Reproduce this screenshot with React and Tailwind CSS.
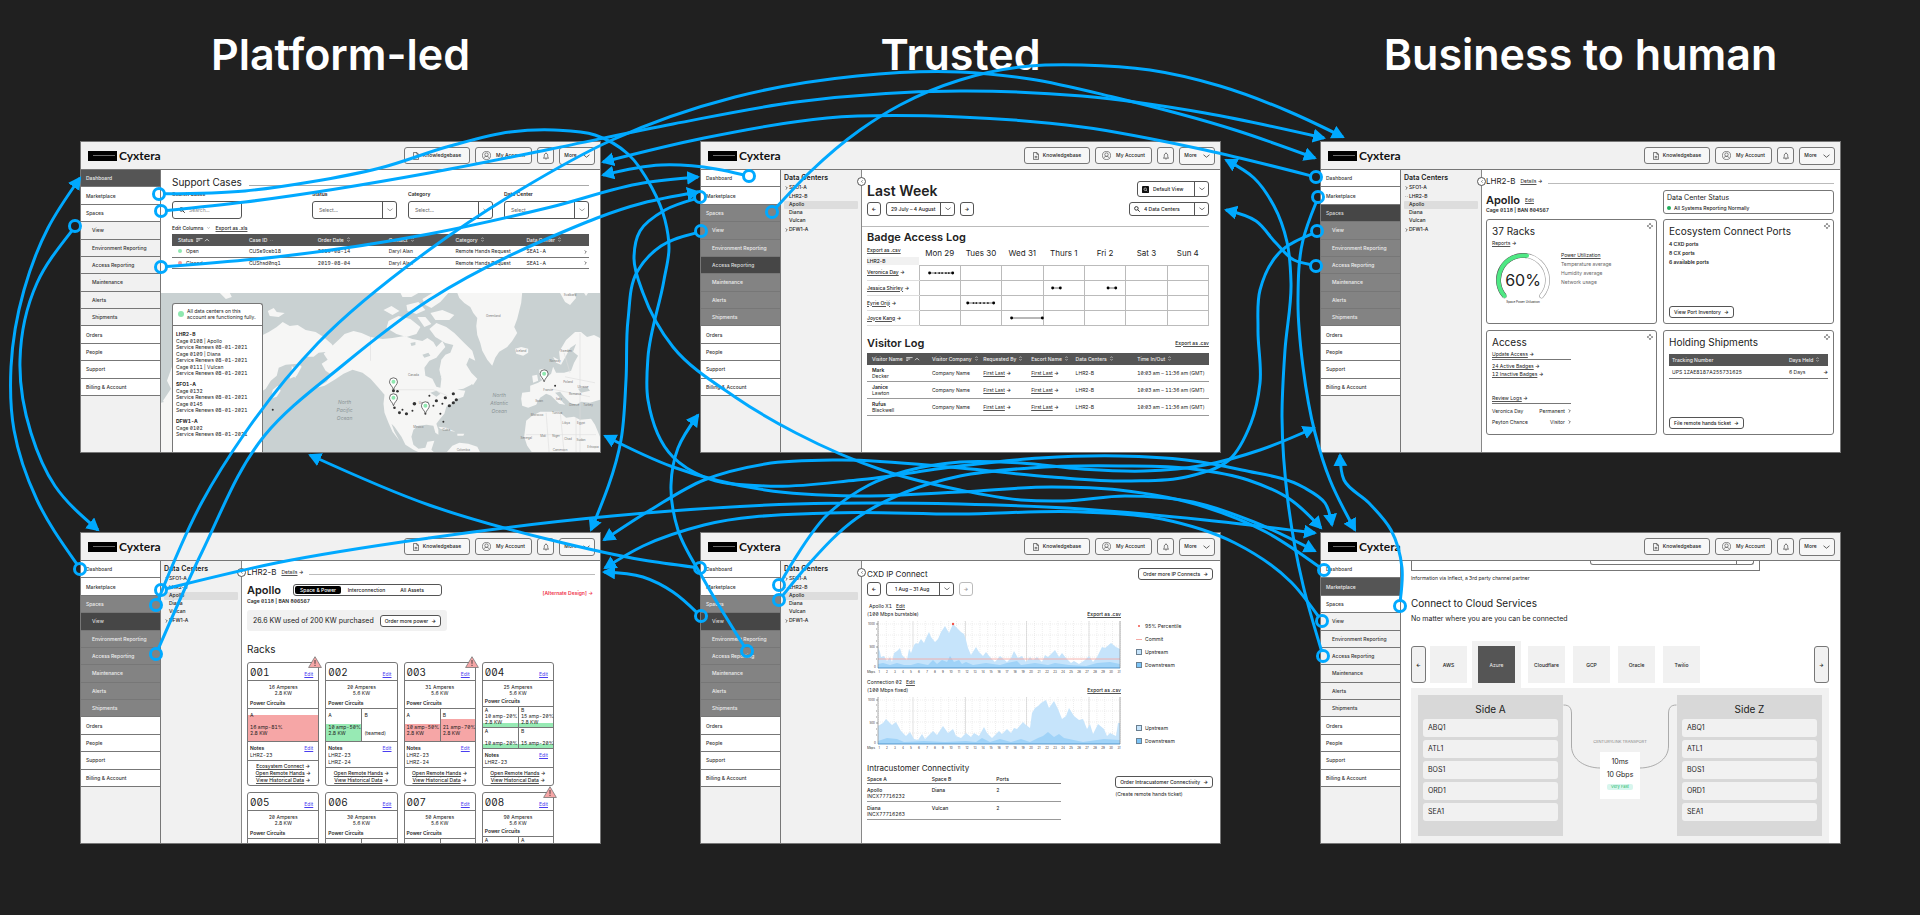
import React from "react";

/* ---------- shared pieces ---------- */

function ChevronDown({ className = "w-[7px]" }) {
  return (
    <svg viewBox="0 0 14 8" className={className} fill="none" stroke="currentColor" strokeWidth="1.4" aria-hidden="true">
      <path d="M1 1.5l6 5 6-5" />
    </svg>
  );
}

function ChevronRight() {
  return (
    <svg viewBox="0 0 6 10" className="inline-block h-[4px] w-[3px]" fill="none" stroke="currentColor" strokeWidth="1.6" aria-hidden="true">
      <path d="M1 1l4 4-4 4" />
    </svg>
  );
}

function SortIcon() {
  return (
    <svg viewBox="0 0 8 12" className="ml-[3px] inline-block h-[5px] w-[3px] align-baseline" fill="none" stroke="currentColor" strokeWidth="1.4" aria-hidden="true">
      <path d="M1 4.5L4 1l3 3.5M1 7.5L4 11l3-3.5" />
    </svg>
  );
}

function SortActiveIcon() {
  return (
    <svg viewBox="0 0 34 10" className="ml-[3px] inline-block h-[4px] w-[14px] align-baseline" fill="none" stroke="currentColor" strokeWidth="2" aria-hidden="true">
      <path d="M0 1.5h16M0 5h10M0 8.500h5M22 8l5-5 5 5" />
    </svg>
  );
}

function SearchIcon() {
  return (
    <svg viewBox="0 0 12 12" className="h-[6px] w-[6px] shrink-0" fill="none" stroke="currentColor" strokeWidth="1.8" aria-hidden="true">
      <circle cx="4.800" cy="4.800" r="3.600" />
      <path d="M7.500 7.500L11.500 11.500" />
    </svg>
  );
}

function DragIcon() {
  return (
    <svg viewBox="0 0 12 12" className="h-[6px] w-[6px]" fill="#222" aria-hidden="true">
      <path d="M6 0l2.400 2.800H3.600zM6 12L3.600 9.200h4.800zM0 6l2.800-2.400v4.800zM12 6L9.200 8.400V3.600z" />
    </svg>
  );
}

function TextLink({ children, arrow, className = "" }) {
  return (
    <a href="#" className={`whitespace-nowrap ${className}`}>
      <span className="underline decoration-[#555] underline-offset-1">{children}</span>
      {arrow && <span className="font-semibold"> →</span>}
    </a>
  );
}

function PillButton({ children }) {
  return (
    <button className="flex h-[12px] items-center rounded-[3px] border border-[#555] bg-white px-[4px] text-[5px] leading-[6px] font-medium whitespace-nowrap">
      {children}
      <span className="pl-[3px] font-bold">→</span>
    </button>
  );
}

function SquareButton({ label, children, faded }) {
  return (
    <button
      aria-label={label}
      className={`flex h-[14px] w-[14px] items-center justify-center rounded-[3px] border text-[5px] font-bold ${
        faded ? "border-[#bbb] text-[#999]" : "border-[#555]"
      }`}
    >
      {children}
    </button>
  );
}

function SelectBox({ label, value, icon, className }) {
  return (
    <div className={`flex items-stretch rounded-[3px] border border-[#555] bg-white [font-feature-settings:normal] ${className}`}>
      {icon && <span className="flex items-center pl-[4px]">{icon}</span>}
      <select aria-label={label} className="w-0 min-w-0 flex-1 appearance-none bg-transparent pl-[4px] text-[5px] outline-none">
        <option>{value}</option>
      </select>
      <span className="pointer-events-none flex w-[14px] items-center justify-center border-l border-[#555]">
        <ChevronDown className="w-[6px]" />
      </span>
    </div>
  );
}

const NAV = [
  ["Dashboard"],
  ["Marketplace"],
  ["Spaces", true],
  ["View", true, true],
  ["Environment Reporting", true, true],
  ["Access Reporting", true, true],
  ["Maintenance", true, true],
  ["Alerts", true, true],
  ["Shipments", true, true],
  ["Orders"],
  ["People"],
  ["Support"],
  ["Billing & Account"],
];

function Sidebar({ active }) {
  const inSpaces = NAV.some(([name, group]) => name === active && group);
  return (
    <nav className="w-[80px] shrink-0 border-r border-[#777] bg-[#f1f1f1]">
      <ul className="grid h-[226px] auto-rows-fr text-[5px] leading-[6px]">
        {NAV.map(([name, group, sub]) => {
          let tone = "bg-white text-[#333]";
          if (name === active) tone = inSpaces ? "bg-[#464646] text-[#ddd]" : "bg-[#555] text-[#eee]";
          else if (group && inSpaces) tone = "bg-[#838383] text-[#eee]";
          else if (sub) tone = "bg-[#f1f1f1] text-[#333]";
          return (
            <li key={name} className={`border-b border-[#777] ${tone}`}>
              <a href="#" className={`flex h-full items-center font-medium ${sub ? "pl-[11px]" : "pl-[5px]"}`}>
                {name}
              </a>
            </li>
          );
        })}
      </ul>
    </nav>
  );
}

function DataCenters() {
  return (
    <aside className="relative w-[81px] shrink-0 border-r border-[#888] bg-[#f1f1f1] px-[3px] pt-[3px] text-[5px] [font-feature-settings:normal]">
      <h3 className="text-[7px] leading-[10px] font-semibold">Data Centers</h3>
      <ul className="font-medium">
        <li className="flex h-[9px] items-center gap-[1px] pl-[1px]"><ChevronRight />SFO1-A</li>
        <li className="flex h-[9px] items-center gap-[1px] pl-[1px]"><ChevronDown className="w-[3px]" />LHR2-B</li>
        <li className="flex h-[8px] items-center rounded-[1px] bg-[#ddd] pl-[5px]">Apollo</li>
        <li className="flex h-[8px] items-center pl-[5px]">Diana</li>
        <li className="flex h-[8px] items-center pl-[5px]">Vulcan</li>
        <li className="flex h-[9px] items-center gap-[1px] pl-[1px]"><ChevronRight />DFW1-A</li>
      </ul>
      <button
        aria-label="Collapse data centers"
        className="absolute top-[7px] -right-[5px] z-10 flex h-[9px] w-[9px] items-center justify-center rounded-full border border-[#555] bg-white"
      >
        <svg viewBox="0 0 6 10" className="h-[3px] w-[2px]" fill="none" stroke="#333" strokeWidth="2">
          <path d="M5 1L1 5l4 4" />
        </svg>
      </button>
    </aside>
  );
}

function HeaderBar() {
  const box = "flex items-center justify-center rounded-[3px] border border-[#777] bg-[#f7f7f7]";
  return (
    <header className="flex h-[28px] shrink-0 items-center justify-between border-b border-[#777] bg-[#f1f1f1] pr-[5px] pl-[7px]">
      <a href="#" className="flex items-center gap-[2px] font-['Lato',sans-serif] text-[12px] leading-[14px] font-bold text-[#111]">
        <svg viewBox="0 0 29 10" className="h-[10px] w-[29px]" aria-hidden="true">
          <rect width="29" height="10" fill="#000" />
          <path d="M5 4.500h22" stroke="#999" strokeWidth="0.700" />
        </svg>
        Cyxtera
      </a>
      <div className="flex items-center gap-[5px] text-[5px] font-medium">
        <button className={`${box} h-[17px] w-[66px] gap-[4px]`}>
          <svg viewBox="0 0 14 18" className="h-[8px] w-[6px]" fill="none" stroke="#333" strokeWidth="1.500">
            <path d="M1 1h8l4 4v12H1zM9 1v4h4M4 10h6M4 13h6" />
          </svg>
          Knowledgebase
        </button>
        <button className={`${box} h-[17px] w-[57px] gap-[5px]`}>
          <svg viewBox="0 0 20 20" className="h-[9px] w-[9px]" fill="none" stroke="#333" strokeWidth="1.200">
            <circle cx="10" cy="10" r="9" />
            <circle cx="10" cy="8" r="3.800" />
            <path d="M4 16c1-3 3-4 6-4s5 1 6 4" />
          </svg>
          My Account
        </button>
        <button aria-label="Notifications" className={`${box} h-[17px] w-[17px]`}>
          <svg viewBox="0 0 14 18" className="h-[8px] w-[6px]" fill="none" stroke="#333" strokeWidth="1.500">
            <path d="M1 14h12c-1.500-1-2-2-2-6 0-3-1.500-5-4-5S3 5 3 8c0 4-.5 5-2 6zM7 1v2M5.500 16h3" />
          </svg>
        </button>
        <button className={`${box} h-[18px] w-[36px] gap-[6px]`}>
          More
          <ChevronDown />
        </button>
      </div>
    </header>
  );
}

function Screen({ name, active, centers, children }) {
  return (
    <article aria-label={name} className="flex aspect-[521/312] flex-col overflow-hidden border border-[#777] bg-white text-[#222]">
      <HeaderBar />
      <div className="flex min-h-0 flex-1">
        <Sidebar active={active} />
        {centers && <DataCenters />}
        <div className="flex min-w-0 flex-1 flex-col">{children}</div>
      </div>
    </article>
  );
}

/* ---------- support cases ---------- */

const PINS = [[233, 97], [233, 113], [265, 121], [384, 89]];
const DOTS = [
  [233, 98, 1.5], [237, 98.500, 1.300], [234, 115, 1.300], [239, 120, 1.500], [242, 117, 1], [246, 121, 1.600], [252, 118, 1],
  [254, 111, 1.800], [269, 103, 1], [276, 108, 1.600], [273, 113, 1], [265, 121, 1], [282, 111, 1], [285, 105, 1.600],
  [293, 101, 1.600], [296, 107, 1.600], [293, 110, 1.600], [289, 113, 1.600], [280, 121, 1], [283, 129, 1], [395, 93, 1], [112, 117, 1],
];
const PLACES = [
  [333, 24, "Greenland"], [361, 59, "Iceland"], [253, 83, "Canada"], [395, 69, "Norway"], [406, 59, "Sweden"], [263, 111, "United"],
  [258, 135, "Mexico"], [286, 138, "Cuba"], [388, 98, "France"], [408, 90, "Poland"], [423, 95, "Ukraine"], [415, 102, "Romania"],
  [379, 109, "Spain"], [399, 107, "Italy"], [414, 113, "Greece"], [428, 113, "Turkey"], [377, 123, "Morocco"], [397, 121, "Tunisia"],
  [406, 131, "Libya"], [421, 131, "Egypt"], [366, 146, "Senegal"], [383, 144, "Mali"], [396, 144, "Niger"], [408, 147, "Chad"],
  [421, 148, "Sudan"], [433, 155, "Ethiopia"], [400, 158, "Cameroon"], [303, 158, "Colombia"], [410, 3, "Svalbard"],
];

function WorldMap() {
  return (
    <svg viewBox="0 0 440 160" preserveAspectRatio="xMinYMin slice" className="h-full w-full" role="img" aria-label="Data center map">
      <rect width="440" height="180" fill="#c9d1d2" />
      <g fill="#f6f6f5">
        {/* Greenland */}
        <path d="M297 0l2 5 5 5 6 4 3 6 4 5-1 8 1 9 3 8 2 8 5 9 5 6 3-8 4-6 8-5 5-6 5-8-3-6 3-8 2-8 2-8 1-10z" />
        {/* North America */}
        <path d="M179 46l5-5 9-3 8 2 9 4 12 2 10-1 12-2 8 3 10 2 5-3 6 4 3 5 6-6 3 6-5 6-4 5-7 3-5 7 1 8 7 3 4 8 4 1 1-9-2-9 2-10 7 0 5 4 4 6 5 5 6 3 3 7-8 4-6 1 8 1-2 6-8 3-4 4-5 3-2 7-5 6-3 4 2 6 0 5-3-2-2-7-7-1-8 1-5 4-2 7 2 8 5 4 7-1 2-6 7-1-3 9 4 4 6 2 4 7 6 2-4 2-8-4-8-5-10-4-8-4-8-5-4-8-7-10-3-3 3 8 5 9-7-9-4-9-4-10-1-9 1-9-6-7-8-9-8-6-10-3-9 4-9 6-10 6-8 2 10-6 5-7-6-4-4-7 6-4-4-6z" />
        {/* Labrador and Baffin */}
        <path d="M281 67l4-5 5-2 3-8-8-2-10-6-6-8 7-6 10 4 8 6 10 10 8 8 3 10-6-3-3 7 5 8 6 6-4 6-8-2-7 2-8-4-3-9z" />
        {/* Arctic islands */}
        <path d="M228 28l10-5 12 3 10 8-4 7-10 3-10-3-10-6zM246 12l12-3 7 8-9 4-9-3zM262 6l10-6 16 0-8 9-9 6-6-3zM270 20l12-3 12 5-5 5-14 0zM240 0l18 0-7 4-9 0zM223 17l8-4 8 5-7 4zM257 24l8 0 6 7-7 3z" />
        {/* Caribbean and South America */}
        <path d="M278 134l8 1 9 4-6-1-9-2zM297 141l7 0-1 2-6 0zM286 160l6-7 7-3 9 1 9 3 3 6z" />
        {/* Iceland and British Isles */}
        <path d="M355 56l6-2 7 2 0 4-5 3-7-2zM379 77l5-1 1 6 4 7-1 4-7 1 3-5-4-4zM372 83l5-1 1 6-5 2z" />
        {/* Europe */}
        <path d="M400 68l-1-9 7-12 9-8 6 0 6 5 7-2 6 3v62l-10 3-9-1-5 3-6-2-6-6-4-5-5 1 6 6 4 6-6-1-8-8-5-2-6 4-4 7-8 3-6-2-1-7 1-6 8-1 0-6 8-3 8-5 5-4 2-7 3 6 8 0 7-2 3-8 4-7-5-4 3-8-6 4-4 8-5 9-5-2-3-6z" />
        {/* Africa */}
        <path d="M366 128l6-5 8-4 10 0 9 0 7 6 8-1 6 3 11-1 4 6 5 12v16h-68l-5-7-3-9z" />
        {/* Svalbard */}
        <path d="M400 0l14 0 2 5-6 7-5-3zM424 0l4 0-2 3z" />
        {/* Siberia and East Asia */}
        <path d="M102 42l6-3 8-5 6-5 7 4 8-1 8 5 10 2 8 5 8 7 4 6-8 2-9 1-5 4-9 0-7 6 4 4-5 9-7 3 2-9 6-6-12 1-7 3-2 8-6 5-5 8-6 4 3 9-4 8-7-2-2 15-20 30H0v-20l5-6-3-8 6-9-6-9 8-12-4-8 5-14 4-8 20 6z" />
        <path d="M112 97l5-4 3 5-4 6-6 2zM131 73l4 4 0 8-4-2zM107 18l6-3 3 4 8 1-6 4-9-1zM59 0l10 0 2 4-6 2z" />
        <path d="M169 58l5-4 6 6-4 2zM0 110l8-2 3 10 2 12 0 30H0z" />
      </g>
      <path d="M420 40v120M400 118l4 42M386 120l3 40M416 125v35M366 142h70M405 84l30 6M390 96l40 8M404 60l6 20M210 44v24M231 97h42l14 6" stroke="#ddd" strokeWidth="0.600" fill="none" />
      <g fill="#c9d1d2">
        <path d="M262 62l6-2 2 3-6 2zM250 50l5-1 0 3-4 1zM276 84l5-1-1 3zM270 100l6-2 4 3-4 3zM400 106l6 2-2 3zM418 96l9-2 3 4-9 2z" />
      </g>
      <g fontSize="3" fill="#777" textAnchor="middle">
        {PLACES.map(([x, y, t]) => (
          <text key={t} x={x} y={y}>{t}</text>
        ))}
      </g>
      <g fontSize="5" fill="#8a9496" fontStyle="italic" textAnchor="middle">
        <text x="184" y="111">North</text>
        <text x="184" y="119">Pacific</text>
        <text x="184" y="127">Ocean</text>
        <text x="339" y="104">North</text>
        <text x="339" y="112">Atlantic</text>
        <text x="339" y="120">Ocean</text>
      </g>
      {DOTS.map(([x, y, r]) => (
        <circle key={`${x}-${y}`} cx={x} cy={y} r={r} fill="#333" />
      ))}
      {PINS.map(([x, y]) => (
        <g key={`${x}-${y}`}>
          <path d={`M${x} ${y}c-1-4-4-5-4-8a4 4 0 0 1 8 0c0 3-3 4-4 8z`} fill="#fff" stroke="#333" strokeWidth="0.700" />
          <circle cx={x} cy={y - 8} r="2" fill="#8fe8b0" />
        </g>
      ))}
    </svg>
  );
}

const CAGES = [
  ["LHR2-B", ["Cage 0108 | Apollo", "Cage 0109 | Diana", "Cage 0111 | Vulcan"]],
  ["SFO1-A", ["Cage 0132", "Cage 0145"]],
  ["DFW1-A", ["Cage 0102"]],
];

function SupportCases() {
  return (
    <Screen name="Support Cases" active="Dashboard">
      <div className="px-[11px] pt-[6px]">
        <div className="flex h-[12px] items-center gap-[7px]">
          <h3 className="text-[10px] leading-[12px]">Support Cases</h3>
          <span className="mt-[6px] h-px flex-1 bg-[#aaa]" />
        </div>
        <div className="mt-[3px] flex justify-between text-[5px] leading-[6px]">
          <div className="w-[70px]">
            <label htmlFor="search-cases" className="block font-semibold">Search Cases</label>
            <div className="mt-[4px] flex h-[18px] items-center gap-[4px] rounded-[3px] border border-[#555] px-[6px]">
              <SearchIcon />
              <input id="search-cases" placeholder="Search..." className="w-full min-w-0 bg-transparent outline-none placeholder:text-[#888]" />
            </div>
          </div>
          <div className="flex gap-[11px]">
            {["Status", "Category", "Data Center"].map((label) => (
              <div key={label} className="w-[85px]">
                <span className="block font-semibold">{label}</span>
                <SelectBox label={label} value="Select..." className="mt-[4px] h-[18px] pl-[2px] text-[#666]" />
              </div>
            ))}
          </div>
        </div>
        <div className="mt-[6px] flex items-center gap-[6px] text-[5px] leading-[6px] font-medium">
          <button className="flex items-center gap-[3px]">
            Edit Columns <ChevronDown className="w-[3px]" />
          </button>
          <TextLink>Export as .xls</TextLink>
        </div>
        <table className="mt-[3px] w-full table-fixed text-left text-[5px] leading-[6px]">
          <colgroup>
            <col className="w-[17%]" />
            <col className="w-[17%]" />
            <col className="w-[17%]" />
            <col className="w-[17%]" />
            <col className="w-[17%]" />
            <col className="w-[12%]" />
            <col className="w-[3%]" />
          </colgroup>
          <thead>
            <tr className="h-[12px] bg-[#555] text-[#eee]">
              <th className="pl-[6px] font-medium whitespace-nowrap">Status<SortActiveIcon /></th>
              <th className="pl-[6px] font-medium">Case ID <ChevronDown className="ml-px inline-block w-[3px]" /></th>
              <th className="pl-[4px] font-medium">Order Date<SortIcon /></th>
              <th className="pl-[4px] font-medium">Contact<SortIcon /></th>
              <th className="font-medium">Category<SortIcon /></th>
              <th className="font-medium whitespace-nowrap">Data Center<SortIcon /></th>
              <th aria-label="Open" />
            </tr>
          </thead>
          <tbody className="whitespace-nowrap">
            {[
              ["Open", "CUSe9ceb18", "2019-08-14", "bg-[#8fe8b0]"],
              ["Closed", "CUShsd0nq1", "2019-08-04", "bg-[#f59a9a]"],
            ].map(([status, id, date, dot]) => (
              <tr key={id} className="h-[11px] border-b border-[#777]">
                <td className="pl-[6px]"><span className={`mr-[4px] inline-block h-[4px] w-[4px] rounded-full ${dot}`} />{status}</td>
                <td className="pl-[6px]">{id}</td>
                <td className="pl-[4px]">{date}</td>
                <td className="pl-[4px]">Daryl Alan</td>
                <td>Remote Hands Request</td>
                <td>SEA1-A</td>
                <td className="pr-[2px] text-right"><ChevronRight /></td>
              </tr>
            ))}
          </tbody>
        </table>
      </div>
      <div className="relative mt-[24px] min-h-0 flex-1">
        <WorldMap />
        <div className="absolute top-[10px] bottom-0 left-[11px] w-[91px] rounded-t-[3px] border border-b-0 border-[#777] bg-white text-[5px] leading-[6px]">
          <p className="flex h-[22px] items-center gap-[3px] border-b border-[#777] pl-[5px] whitespace-nowrap">
            <span className="h-[6px] w-[6px] shrink-0 rounded-full bg-[#8fe8b0]" />
            <span>All data centers on this<br />account are functioning fully.</span>
          </p>
          {CAGES.map(([site, cages]) => (
            <section key={site} className="pt-[5px] pl-[3px] whitespace-nowrap">
              <h4 className="font-bold">{site}</h4>
              {cages.map((cage) => (
                <p key={cage} className="mt-px">{cage}<br />Service Renews 08-01-2021</p>
              ))}
            </section>
          ))}
        </div>
      </div>
    </Screen>
  );
}

/* ---------- access reporting ---------- */

const BADGES = [
  ["Veronica Day", { 0: [10, 16, 20, 23, 27, 30, 34] }],
  ["Jessica Shirley", { 3: [9, 17], 4: [24, 32] }],
  ["Eyrie Oriji", { 1: [7, 13, 16, 20, 24, 28, 34] }],
  ["Joyce Kang", { 2: [10, 42] }],
];
const DAYS = ["Mon 29", "Tues 30", "Wed 31", "Thurs 1", "Fri 2", "Sat 3", "Sun 4"];

function AccessReporting() {
  return (
    <Screen name="Access Reporting" active="Access Reporting" centers>
      <div className="pr-[11px] pl-[5px] pt-[11px] text-[5px] leading-[6px]">
        <div className="flex h-[16px] items-center justify-between">
          <h3 className="pt-[3px] text-[14px] leading-[16px] font-semibold">Last Week</h3>
          <SelectBox
            label="View"
            value="Default View"
            className="h-[16px] w-[72px] font-medium"
            icon={
              <svg viewBox="0 0 12 12" className="h-[7px] w-[7px]">
                <rect width="12" height="12" rx="1.500" fill="#111" />
                <circle cx="5.500" cy="5.500" r="2.200" fill="none" stroke="#fff" />
                <path d="M7 7l2 2" stroke="#fff" />
              </svg>
            }
          />
        </div>
        <div className="mt-[5px] flex items-center gap-[5px] font-medium">
          <SquareButton label="Previous week">←</SquareButton>
          <SelectBox label="Week" value="29 July – 4 August" className="h-[14px] w-[69px]" />
          <SquareButton label="Next week">→</SquareButton>
          <SelectBox label="Data centers" value="4 Data Centers" icon={<SearchIcon />} className="ml-auto h-[14px] w-[80px]" />
        </div>
      </div>
      <hr className="mt-[10px] mr-[11px] border-[#bbb]" />
      <div className="pr-[11px] pl-[5px] text-[5px] leading-[6px]">
        <h4 className="mt-[5px] text-[11px] leading-[11px] font-semibold">Badge Access Log</h4>
        <table className="w-full table-fixed">
          <thead>
            <tr className="h-[22px]">
              <th className="w-[52px] p-0 text-left align-bottom font-medium">
                <TextLink>Export as .csv</TextLink>
                <span className="mt-[4px] block h-[8px] bg-[#f1f1f1] leading-[8px] [font-feature-settings:normal]">LHR2-B</span>
              </th>
              {DAYS.map((day) => (
                <th key={day} className="pb-[2px] text-[8px] leading-[10px] font-normal whitespace-nowrap [font-feature-settings:normal]">{day}</th>
              ))}
            </tr>
          </thead>
          <tbody>
            {BADGES.map(([name, events]) => (
              <tr key={name} className="h-[15px]">
                <td className="border-b border-[#ddd] p-0 font-medium"><TextLink arrow>{name}</TextLink></td>
                {DAYS.map((day, i) => (
                  <td key={day} className="border border-[#bbb] p-0">
                    {events[i] && (
                      <svg viewBox="0 0 42 6" className="block h-[6px] w-full overflow-visible" preserveAspectRatio="xMinYMid meet">
                        <path d={`M${events[i][0]} 3H${events[i].at(-1)}`} stroke="#444" strokeWidth="0.800" />
                        {events[i].map((x, k) => (
                          <circle key={x} cx={x} cy="3" r={k === 0 || k === events[i].length - 1 ? 1.500 : 0.900} fill="#000" />
                        ))}
                      </svg>
                    )}
                  </td>
                ))}
              </tr>
            ))}
          </tbody>
        </table>
        <div className="mt-[11px] flex h-[12px] items-center justify-between">
          <h4 className="text-[11px] leading-[12px] font-semibold">Visitor Log</h4>
          <TextLink className="font-medium">Export as .csv</TextLink>
        </div>
        <table className="mt-[4px] w-full table-fixed text-left whitespace-nowrap">
          <colgroup>
            <col className="w-[19%]" />
            <col className="w-[15%]" />
            <col className="w-[14%]" />
            <col className="w-[13%]" />
            <col className="w-[18%]" />
            <col />
          </colgroup>
          <thead>
            <tr className="h-[12px] bg-[#555] text-[#eee]">
              <th className="pl-[5px] font-medium">Visitor Name<SortActiveIcon /></th>
              <th className="font-medium">Visitor Company<SortIcon /></th>
              <th className="font-medium">Requested By<SortIcon /></th>
              <th className="font-medium">Escort Name<SortIcon /></th>
              <th className="font-medium">Data Centers<SortIcon /></th>
              <th className="font-medium">Time In/Out<SortIcon /></th>
            </tr>
          </thead>
          <tbody>
            {[["Mark", "Decker"], ["Janice", "Lawton"], ["Rufus", "Blackwell"]].map(([first, last]) => (
              <tr key={first} className="h-[17px] border-b border-[#999]">
                <td className="pl-[5px]"><b className="font-semibold">{first}</b><br />{last}</td>
                <td>Company Name</td>
                <td><TextLink arrow>First Last</TextLink></td>
                <td><TextLink arrow>First Last</TextLink></td>
                <td className="[font-feature-settings:normal]">LHR2-B</td>
                <td>10:03 am – 11:36 am (GMT)</td>
              </tr>
            ))}
          </tbody>
        </table>
      </div>
    </Screen>
  );
}

/* ---------- spaces overview ---------- */

function Card({ title, children }) {
  return (
    <section className="relative flex h-[105px] flex-col items-start rounded-[3px] border border-[#777] px-[5px] pt-[5px] pb-[5px] text-[5px] leading-[6px]">
      <h4 className="text-[10px] leading-[12px] [font-feature-settings:normal]">{title}</h4>
      <span className="absolute top-[3px] right-[3px]"><DragIcon /></span>
      {children}
    </section>
  );
}

function Gauge() {
  return (
    <svg viewBox="0 0 60 58" className="h-[58px] w-[60px] [font-feature-settings:normal]" role="img" aria-label="Space power utilization 60%">
      <path d="M12.500 46A24.500 24.500 0 1 1 49.500 46" fill="none" stroke="#999" strokeWidth="4.800" strokeLinecap="round" />
      <path d="M12.500 46A24.500 24.500 0 1 1 49.500 46" fill="none" stroke="#fff" strokeWidth="3.600" strokeLinecap="round" />
      <path d="M12.500 46A24.500 24.500 0 0 1 35 5.800" fill="none" stroke="#555" strokeWidth="4.800" />
      <path d="M12.500 46A24.500 24.500 0 0 1 35 5.800" fill="none" stroke="#4fe884" strokeWidth="4" strokeLinecap="round" />
      <text x="31" y="36" fontSize="16" textAnchor="middle" fill="#222">60%</text>
      <text x="31" y="53" fontSize="3" textAnchor="middle" fill="#222">Space Power Utilization</text>
    </svg>
  );
}

function SpacesOverview() {
  return (
    <Screen name="Spaces" active="Spaces" centers>
      <div className="pr-[6px] pl-[4px] pt-[6px] text-[5px] leading-[6px]">
        <div className="flex h-[10px] items-center gap-[5px]">
          <h3 className="text-[8px] leading-[10px] [font-feature-settings:normal]">LHR2-B</h3>
          <TextLink arrow>Details</TextLink>
          <span className="mt-[4px] h-px flex-1 bg-[#bbb]" />
        </div>
        <div className="mt-[4px] grid grid-cols-2 gap-x-[6px]">
          <div>
            <div className="mt-[4px] flex items-center gap-[5px]">
              <h4 className="text-[11px] leading-[12px] font-semibold">Apollo</h4>
              <TextLink>Edit</TextLink>
            </div>
            <p className="mt-px font-semibold">Cage 0118 | BAN 804567</p>
          </div>
          <div className="h-[24px] rounded-[3px] border border-[#777] px-[3px] pt-[2px]">
            <h4 className="text-[7px] leading-[10px]">Data Center Status</h4>
            <p className="mt-[2px] flex items-center gap-[3px] font-medium">
              <span className="h-[4px] w-[4px] rounded-full bg-[#1fae5c]" />
              All Systems Reporting Normally
            </p>
          </div>
        </div>
        <div className="mt-[5px] grid grid-cols-2 gap-[6px]">
          <Card title="37 Racks">
            <TextLink arrow className="mt-[3px]">Reports</TextLink>
            <div className="mt-[4px] flex gap-[9px]">
              <Gauge />
              <ul className="grid content-start gap-[3px] pt-[2px] text-[#666]">
                <li className="text-[#222]"><TextLink>Power Utilization</TextLink></li>
                <li>Temperature average</li>
                <li>Humidity average</li>
                <li>Network usage</li>
              </ul>
            </div>
          </Card>
          <Card title="Ecosystem Connect Ports">
            <ul className="mt-[4px] grid flex-1 content-start gap-[3px] font-semibold">
              <li>4 CXD ports</li>
              <li>8 CX ports</li>
              <li>6 available ports</li>
            </ul>
            <PillButton>View Port Inventory</PillButton>
          </Card>
          <Card title="Access">
            <div className="flex w-[79px] flex-col items-start">
              <TextLink arrow className="mt-[3px] w-full border-b border-[#777] pb-[2px]">Update Access</TextLink>
              <TextLink arrow className="mt-[3px]">24 Active Badges</TextLink>
              <TextLink arrow className="mt-[2px]">12 Inactive Badges</TextLink>
              <TextLink arrow className="mt-[18px] w-full border-b border-[#777] pb-[2px]">Review Logs</TextLink>
              {[["Veronica Day", "Permanent"], ["Peyton Chance", "Visitor"]].map(([n, k]) => (
                <p key={n} className="mt-[5px] flex w-full items-center justify-between first-of-type:mt-[4px]">
                  <span>{n}</span>
                  <span className="flex items-center gap-[3px]">{k} <ChevronRight /></span>
                </p>
              ))}
            </div>
          </Card>
          <Card title="Holding Shipments">
            <div className="w-full flex-1">
              <table className="mt-[6px] w-full table-fixed text-left whitespace-nowrap">
                <colgroup>
                  <col />
                  <col className="w-[32px]" />
                  <col className="w-[7px]" />
                </colgroup>
                <thead>
                  <tr className="h-[12px] bg-[#555] text-[#eee]">
                    <th className="pl-[3px] font-medium">Tracking Number</th>
                    <th className="font-medium">Days Held<SortIcon /></th>
                    <th aria-label="Open" />
                  </tr>
                </thead>
                <tbody>
                  <tr className="h-[12px] border-b border-[#777]">
                    <td className="pl-[3px]">UPS 1ZAE8187A255731625</td>
                    <td>6 Days</td>
                    <td className="text-right font-bold">→</td>
                  </tr>
                </tbody>
              </table>
            </div>
            <PillButton>File remote hands ticket</PillButton>
          </Card>
        </div>
      </div>
    </Screen>
  );
}

/* ---------- rack view ---------- */

const RED = "bg-[#f6a6a6]";
const GREEN = "bg-[#97eab4]";
const RACKS = [
  { id: "001", amps: "16 Amperes", kw: "2.8 KW", warn: true, eco: true, circuits: [["A", "16 amp-81%", "2.8 KW", 81, RED]], notes: ["LHRZ-23", "LHRZ-24"] },
  { id: "002", amps: "20 Amperes", kw: "5.6 KW", circuits: [["A", "10 amp-50%", "2.8 KW", 52, GREEN], ["B", "(teamed)", "", 0, ""]], notes: ["LHRZ-23", "LHRZ-24"] },
  { id: "003", amps: "31 Amperes", kw: "5.6 KW", warn: true, circuits: [["A", "10 amp-50%", "2.8 KW", 52, RED], ["B", "21 amp-70%", "2.8 KW", 70, RED]], notes: ["LHRZ-23", "LHRZ-24"] },
  {
    id: "004",
    amps: "25 Amperes",
    kw: "5.6 KW",
    dense: true,
    circuits: [
      ["A", "10 amp-20%", "2.8 KW", 20, GREEN],
      ["B", "15 amp-20%", "2.8 KW", 20, GREEN],
      ["A", "10 amp-20%", "", 20, GREEN],
      ["B", "15 amp-20%", "", 20, GREEN],
    ],
    notes: ["LHRZ-23", "LHRZ-23"],
  },
  { id: "005", amps: "20 Amperes", kw: "2.8 KW", circuits: [["A", "", "", 0, ""]] },
  { id: "006", amps: "30 Amperes", kw: "5.6 KW", circuits: [["A", "", "", 0, ""], ["B", "", "", 0, ""]] },
  { id: "007", amps: "50 Amperes", kw: "5.6 KW", circuits: [["A", "", "", 0, ""], ["B", "", "", 0, ""]] },
  { id: "008", amps: "90 Amperes", kw: "5.6 KW", warn: true, dense: true, circuits: [["A", "10 amp-60%", "", 0, ""], ["A", "30 amp-60%", "", 0, ""]] },
];

function Rack({ id, amps, kw, warn, eco, dense, circuits, notes }) {
  return (
    <section className="relative flex h-[124px] flex-col rounded-[3px] border border-[#777] text-[5px] leading-[6px]">
      {warn && (
        <svg viewBox="0 0 14 12" className="absolute -top-[7px] -right-[4px] z-10 h-[12px] w-[14px]" aria-label="Warning">
          <path d="M7 .7L13.400 11.500H.6z" fill="#f6a6a6" stroke="#777" strokeWidth="0.800" />
          <path d="M7 4v3.800M7 8.800v1.200" stroke="#333" strokeWidth="0.900" />
        </svg>
      )}
      <header className="flex h-[18px] items-center justify-between border-b border-[#777] pr-[5px] pl-[2px]">
        <h5 className="text-[10px] leading-[12px]">{id}</h5>
        <a href="#" className="mt-[4px] text-[#4a3df0] underline">Edit</a>
      </header>
      <p className="mt-[3px] text-center">{amps}<br />{kw}</p>
      <p className={`pl-[2px] font-semibold ${dense ? "mt-[2px]" : "mt-[4px]"}`}>Power Circuits</p>
      <div className={`mt-[2px] grid border-t border-[#777] ${circuits.length > 1 ? "grid-cols-2" : "grid-cols-1"}`}>
        {circuits.map(([label, load, power, level, tone], i) => (
          <div
            key={i}
            className={`relative flex flex-col border-b border-[#777] pl-[2px] whitespace-nowrap ${
              dense ? "h-[21px] pb-[2px]" : "h-[33px] pt-[3px] pb-[5px]"
            } ${i % 2 ? "border-l" : ""} ${notes ? "justify-between" : ""}`}
          >
            <span className={`absolute inset-x-0 bottom-0 ${tone}`} style={{ height: `${level}%` }} />
            <span className="relative">{label}</span>
            {load && <span className="relative">{load}{power && <><br />{power}</>}</span>}
          </div>
        ))}
      </div>
      {notes && (
        <>
          <div className="min-h-0 flex-1 overflow-hidden pt-[3px] pr-[5px] pl-[2px]">
            <p className="flex justify-between font-semibold">Notes <a href="#" className="font-normal text-[#4a3df0] underline">Edit</a></p>
            {notes.map((note, i) => (
              <p key={i} className="mt-[1px]">{note}</p>
            ))}
          </div>
          <div className="flex flex-col items-center gap-px border-t border-[#777] py-[2px] font-medium">
            {eco && <TextLink arrow>Ecosystem Connect</TextLink>}
            <TextLink arrow>Open Remote Hands</TextLink>
            <TextLink arrow>View Historical Data</TextLink>
          </div>
        </>
      )}
    </section>
  );
}

function RackView() {
  return (
    <Screen name="Racks" active="View" centers>
      <div className="pr-[5px] pl-[5px] pt-[6px] text-[5px] leading-[6px]">
        <div className="flex h-[10px] items-center gap-[5px]">
          <h3 className="text-[8px] leading-[10px] [font-feature-settings:normal]">LHR2-B</h3>
          <TextLink arrow>Details</TextLink>
          <span className="mt-[4px] h-px flex-1 bg-[#bbb]" />
        </div>
        <div className="mt-[7px] flex h-[12px] items-center">
          <h4 className="text-[11px] leading-[12px] font-semibold">Apollo</h4>
          <div role="tablist" className="ml-[12px] flex h-[12px] w-[149px] items-stretch rounded-[3px] border border-[#555] p-px font-medium">
            <button role="tab" aria-selected="true" className="w-[46px] rounded-[2px] bg-black text-white">Space &amp; Power</button>
            <button role="tab" className="flex-1 pl-[2px]">Interconnection</button>
            <button role="tab" className="w-[50px] pr-[6px]">All Assets</button>
          </div>
          <a href="#" className="mt-[6px] ml-auto pr-[2px] font-semibold text-[#f0344a]">[Alternate Design] →</a>
        </div>
        <p className="mt-[2px] font-semibold">Cage 0118 | BAN 806567</p>
        <div className="mt-[6px] flex h-[21px] w-fit items-center gap-[6px] rounded-[3px] bg-[#f1f1f1] px-[6px]">
          <span className="text-[7px] leading-[9px] [font-feature-settings:normal]">26.6 KW used of 200 KW purchased</span>
          <PillButton>Order more power</PillButton>
        </div>
        <h4 className="mt-[12px] text-[10px] leading-[12px]">Racks</h4>
        <div className="mt-[7px] mr-[41px] grid grid-cols-4 gap-[6px]">
          {RACKS.map((rack) => (
            <Rack key={rack.id} {...rack} />
          ))}
        </div>
      </div>
    </Screen>
  );
}

/* ---------- CXD IP connect ---------- */

const UP_1 = "0,26 2,31 3,36 6,35 9,40 12,36 14,41 16,32 19,30 22,27 24,34 29,39 31,28 33,32 36,24 38,22 40,23 43,18 46,22 48,17 51,11 53,16 57,21 60,18 63,11 67,5 71,12 75,3 79,7 83,11 86,13 88,19 90,27 93,34 98,26 101,31 105,35 108,31 112,36 117,41 122,35 129,41 133,37 136,30 140,37 144,35 148,41 152,36 155,39 159,36 164,41 167,34 170,36 177,29 181,36 184,32 188,37 193,42 196,40 201,43 207,39 211,35 215,41 219,36 224,26 227,27 233,22 238,26 242,28";
const DOWN_1 = "0,43 5,42 12,44 19,42 26,44 33,44 40,42 50,44 55,39 59,43 64,39 69,41 72,35 76,41 81,39 84,43 88,41 95,44 108,42 122,44 129,42 139,40 143,44 157,42 170,44 177,42 191,44 208,45 219,42 232,41 242,43";
const UP_2 = "0,29 5,26 8,22 14,28 18,25 23,34 28,39 32,35 36,42 40,43 44,37 47,42 50,39 55,34 59,38 65,29 70,36 75,32 78,39 83,41 88,36 93,40 96,36 101,39 106,30 109,36 114,41 121,34 124,37 129,32 133,36 136,31 139,32 145,25 148,28 152,31 154,16 157,11 160,9 163,6 168,3 171,11 176,4 180,12 184,22 188,19 191,11 196,19 201,23 205,22 209,32 212,27 215,37 220,27 226,32 229,39 232,36 238,39 240,26 242,26";
const DOWN_2 = "0,44 9,41 19,42 26,45 46,44 67,45 88,44 98,45 104,41 112,45 122,42 133,45 143,42 152,45 160,41 165,39 170,35 176,40 181,37 186,41 191,42 205,45 226,42 242,43";

function TrafficChart({ up, down, commit }) {
  return (
    <svg viewBox="0 0 254 53" className="block h-[53px] w-[254px] [font-feature-settings:normal]" role="img" aria-label="Traffic in Mbps per day">
      <g stroke="#ddd" strokeWidth="0.500" strokeDasharray="1 1">
        {Array.from({ length: 32 }, (_, i) => (
          <path key={i} d={`M${11.500 + i * 7.800} 0V47`} />
        ))}
        {[3, 14, 25, 36].map((y) => (
          <path key={y} d={`M11 ${y}H253`} />
        ))}
      </g>
      <path d="M46 0V47M98.500 0V47M159.500 0V47M222 0V47" stroke="#ccc" strokeWidth="0.600" />
      <g transform="translate(11 0)">
        <polygon points={`0,47 ${up} 242,47`} fill="#c6e4fb" />
        <polygon points={`0,47 ${down} 242,47`} fill="#a0d3f8" />
        {commit && <path d="M0 38h242" stroke="#f5a9a4" strokeWidth="0.900" />}
        {commit && <circle cx="75" cy="3" r="1.200" fill="#f0544a" />}
        <path d="M0 0V47M242 0V47" stroke="#888" strokeWidth="0.700" />
        <path d="M0 47H242" stroke="#3a86c0" strokeWidth="0.800" />
        <path d="M-2 3h2M-2 8h1M-2 14h1M-2 20h1M-2 26h2M-2 32h1M-2 38h1" stroke="#555" strokeWidth="0.600" />
      </g>
      <g fontSize="3" fill="#333" textAnchor="end">
        <text x="8" y="4">1000</text>
        <text x="8" y="27">500</text>
        <text x="9" y="47">0</text>
        <text x="8" y="52">Mbps</text>
      </g>
      <g fontSize="3" fill="#333" textAnchor="middle">
        {Array.from({ length: 31 }, (_, i) => (
          <text key={i} x={12 + i * 8} y="52">{i + 1}</text>
        ))}
      </g>
    </svg>
  );
}

function Swatch({ tone }) {
  return <span className={`h-[6px] w-[6px] border border-[#6a7f90] ${tone}`} />;
}

function Connection({ name, kind, up, down, commit }) {
  return (
    <div className="flex gap-[15px]">
      <div className="w-[254px]">
        <p className={`flex gap-[4px] ${commit ? "pl-[2px]" : ""}`}>{name} <TextLink>Edit</TextLink></p>
        <p className="mt-[2px] flex justify-between">({kind}) <TextLink className="font-medium">Export as .csv</TextLink></p>
        <div className="mt-[4px]">
          <TrafficChart up={up} down={down} commit={commit} />
        </div>
      </div>
      <ul className="grid content-end gap-[7px] pb-[6px]">
        {commit && (
          <>
            <li className="flex items-center gap-[3px]">
              <span className="flex w-[6px] justify-center"><span className="h-[2px] w-[2px] rounded-full bg-[#f0544a]" /></span>95% Percentile
            </li>
            <li className="flex items-center gap-[3px]"><span className="h-px w-[6px] bg-[#f5a9a4]" />Commit</li>
          </>
        )}
        <li className="flex items-center gap-[3px]"><Swatch tone="bg-[#c6e4fb]" />Upstream</li>
        <li className="flex items-center gap-[3px]"><Swatch tone="bg-[#7cc4f7]" />Downstream</li>
      </ul>
    </div>
  );
}

function IpConnect() {
  return (
    <Screen name="CXD IP Connect" active="View" centers>
      <div className="pr-[7px] pl-[5px] pt-[7px] text-[5px] leading-[6px]">
        <div className="flex h-[12px] items-center justify-between">
          <h3 className="text-[8px] leading-[10px]">CXD IP Connect</h3>
          <PillButton>Order more IP Connects</PillButton>
        </div>
        <div className="mt-[2px] flex items-center gap-[5px] font-medium">
          <SquareButton label="Previous month">←</SquareButton>
          <SelectBox label="Month" value="1 Aug – 31 Aug" className="h-[14px] w-[68px] pl-[4px]" />
          <SquareButton label="Next month" faded>→</SquareButton>
        </div>
        <div className="mt-[7px]">
          <Connection name="Apollo X1" kind="100 Mbps burstable" up={UP_1} down={DOWN_1} commit />
        </div>
        <div className="mt-[5px]">
          <Connection name="Connection 02" kind="100 Mbps fixed" up={UP_2} down={DOWN_2} />
        </div>
        <h4 className="mt-[13px] text-[8px] leading-[10px]">Intracustomer Connectivity</h4>
        <div className="mt-[3px] flex items-start justify-between">
          <table className="w-[194px] table-fixed text-left">
            <thead>
              <tr className="h-[7px] border-b border-[#777]">
                <th className="font-medium">Space A</th>
                <th className="font-medium">Space B</th>
                <th className="font-medium">Ports</th>
              </tr>
            </thead>
            <tbody>
              {[["Apollo", "INCX77716232", "Diana"], ["Diana", "INCX77716263", "Vulcan"]].map(([a, id, b]) => (
                <tr key={id} className="h-[18px] border-b border-[#999] align-top">
                  <td className="pt-[3px]"><span className="font-medium">{a}</span><br />{id}</td>
                  <td className="pt-[3px] font-medium">{b}</td>
                  <td className="pt-[3px]">2</td>
                </tr>
              ))}
            </tbody>
          </table>
          <div>
            <PillButton>Order Intracustomer Connectivity</PillButton>
            <p className="mt-[3px]">(Create remote hands ticket)</p>
          </div>
        </div>
      </div>
    </Screen>
  );
}

/* ---------- marketplace ---------- */

function SidePanel({ title }) {
  return (
    <section className="h-[141px] w-[145px] bg-[#d8d8d8] px-[5px] pt-[8px]">
      <h5 className="text-center text-[10px] leading-[12px]">{title}</h5>
      <ul className="mt-[4px] grid gap-[3px] text-[7px] [font-feature-settings:normal]">
        {["ABQ1", "ATL1", "BOS1", "ORD1", "SEA1"].map((site) => (
          <li key={site} className="flex h-[18px] items-center rounded-[3px] bg-[#f1f1f1] pl-[5px]">{site}</li>
        ))}
      </ul>
    </section>
  );
}

function Marketplace() {
  const providers = ["AWS", "Azure", "Cloudflare", "GCP", "Oracle", "Twilio"];
  const arrow = "h-[37px] w-[15px] rounded-[3px] border border-[#777] bg-[#f1f1f1] text-[5px] font-bold";
  return (
    <Screen name="Marketplace" active="Marketplace">
      <div className="flex flex-1 flex-col pr-[11px] pl-[10px] text-[5px] leading-[6px]">
        <div className="mr-[69px] flex h-[10px] justify-end border border-t-0 border-[#777] pr-[5px]">
          <div className="flex h-[4px] w-[164px] justify-end rounded-b-[3px] border border-t-0 border-[#777] pr-[16px]">
            <span className="w-px bg-[#777]" />
          </div>
        </div>
        <p className="mt-[4px]">Information via Inflect, a 3rd party channel partner</p>
        <h3 className="mt-[16px] text-[10px] leading-[12px]">Connect to Cloud Services</h3>
        <p className="mt-[6px] text-[7px] leading-[8px]">No matter where you are you can be connected</p>
        <div className="mt-[18px] flex h-[47px] items-center">
          <button aria-label="Previous providers" className={arrow}>←</button>
          <div role="tablist" className="ml-[4px] flex items-center gap-[8px]">
            {providers.map((p) =>
              p === "Azure" ? (
                <span key={p} className="-mr-px -ml-[3px] flex h-[47px] items-center bg-[#f1f1f1] px-[6px]">
                  <button role="tab" aria-selected="true" className="h-[37px] w-[37px] bg-[#555] text-[#eee]">{p}</button>
                </span>
              ) : (
                <button key={p} role="tab" className="h-[37px] w-[37px] bg-[#f1f1f1] font-medium">{p}</button>
              )
            )}
          </div>
          <button aria-label="More providers" className={`${arrow} ml-auto`}>→</button>
        </div>
        <div className="flex min-h-0 flex-1 items-start justify-between bg-[#f1f1f1] px-[7px] pt-[7px]">
          <SidePanel title="Side A" />
          <div className="relative flex flex-1 flex-col items-center pt-[44px]">
            <svg viewBox="0 0 113 80" className="absolute inset-x-0 top-0 h-[80px] w-full" fill="none" stroke="#999" strokeWidth="0.800" aria-hidden="true">
              <path d="M0 10c6 0 8 3 8 9v32c0 14 14 22 29 22M113 10c-6 0-8 3-8 9v32c0 14-14 22-29 22" />
            </svg>
            <p className="relative text-[4px] leading-[6px] whitespace-nowrap text-[#888]">CENTURYLINK TRANSPORT</p>
            <div className="relative mt-[7px] flex h-[47px] w-[40px] flex-col items-center bg-white pt-[5px] text-[7px] leading-[9px] [font-feature-settings:normal]">
              <span>10ms</span>
              <span className="mt-[4px] whitespace-nowrap">10 Gbps</span>
              <span className="mt-[5px] rounded-[2px] bg-[#d8f6ee] px-[4px] text-[4px] leading-[6px] text-[#16b866]">Very Fast</span>
            </div>
          </div>
          <SidePanel title="Side Z" />
        </div>
      </div>
    </Screen>
  );
}

/* ---------- connectors between screens ---------- */

const LINKS = [
  [[159, 194], [245, 191], [310, 182], [380, 168], [450, 146], [510, 132], [554, 130], [595, 135], [628, 154], [652, 188], [665, 220], [669, 248], [664, 280], [648, 357], [648, 400], [673, 457], [704, 477], [765, 486], [857, 480], [960, 466], [1040, 458], [1119, 456], [1186, 460], [1242, 470], [1303, 487], [1325, 503], [1332, 525]],
  [[161, 211], [245, 202], [429, 173], [551, 149], [673, 124], [796, 102], [960, 91], [1082, 96], [1205, 113], [1324, 138]],
  [[161, 267], [276, 257], [429, 234], [551, 207], [643, 183], [698, 177]],
  [[75, 226], [37, 283], [20, 360], [31, 433], [55, 486], [98, 530]],
  [[749, 176], [716, 169], [661, 165], [603, 175]],
  [[700, 197], [665, 210], [640, 231], [634, 258], [643, 293], [673, 347], [735, 397], [796, 433], [882, 470], [960, 490], [1021, 500], [1064, 501], [1125, 496], [1193, 502], [1254, 522], [1315, 551]],
  [[772, 212], [810, 172], [860, 130], [900, 105], [960, 80], [1030, 66], [1082, 65], [1150, 70], [1220, 86], [1290, 112], [1343, 137]],
  [[701, 231], [661, 246], [637, 272], [628, 320], [626, 380], [621, 440], [591, 530]],
  [[1316, 177], [1205, 150], [1082, 127], [960, 117], [827, 118], [704, 138], [603, 162]],
  [[1318, 197], [1303, 240], [1298, 300], [1303, 367], [1315, 433], [1330, 480], [1355, 530]],
  [[1317, 231], [1280, 252], [1260, 290], [1258, 330], [1260, 383], [1251, 423], [1229, 460], [1186, 477], [1131, 481], [1052, 477], [960, 468], [839, 460], [765, 464], [704, 480], [652, 509], [604, 540]],
  [[1316, 266], [1294, 260], [1276, 243], [1256, 221], [1226, 210]],
  [[80, 569], [37, 500], [14, 430], [11, 367], [24, 290], [48, 228], [80, 178]],
  [[161, 590], [276, 563], [429, 538], [612, 516], [796, 504], [960, 504], [1082, 509], [1205, 520], [1315, 533]],
  [[156, 605], [202, 502], [245, 433], [318, 343], [429, 250], [520, 190], [612, 140], [735, 97], [857, 76], [960, 72], [1030, 79], [1113, 97], [1235, 130], [1315, 158]],
  [[156, 654], [202, 552], [265, 435], [343, 365], [429, 300], [551, 237], [643, 203], [698, 192]],
  [[700, 568], [643, 560], [551, 540], [429, 505], [310, 455]],
  [[701, 616], [673, 592], [643, 577], [604, 572]],
  [[747, 651], [704, 580], [678, 530], [671, 485], [678, 448], [698, 415]],
  [[779, 585], [794, 560], [827, 515], [869, 485], [906, 471], [960, 462], [1021, 463], [1082, 469], [1144, 471], [1205, 465], [1260, 450], [1314, 428]],
  [[779, 600], [808, 565], [857, 518], [906, 492], [960, 476], [1030, 468], [1119, 466], [1193, 469], [1248, 480], [1291, 500], [1321, 528]],
  [[1324, 570], [1266, 532], [1205, 507], [1119, 490], [1052, 487], [960, 492], [857, 496], [765, 490], [673, 467], [605, 436]],
  [[1322, 621], [1291, 582], [1235, 543], [1162, 519], [1082, 512], [960, 514], [827, 513], [704, 525], [643, 546], [605, 568]],
  [[1323, 656], [1303, 585], [1288, 502], [1282, 417], [1285, 350], [1291, 283], [1287, 242], [1274, 206], [1254, 178], [1226, 160]],
  [[1400, 606], [1402, 568], [1391, 530], [1369, 503], [1344, 480], [1340, 455]],
];

/* Smooth curve through the points, with tangents weighted by the distance between neighbours. */
function smoothPath(points) {
  const [[sx, sy], [nx, ny]] = points;
  const first = Math.hypot(nx - sx, ny - sy);
  const pts = [[sx + ((nx - sx) / first) * 6, sy + ((ny - sy) / first) * 6], ...points.slice(1)];
  const segs = pts.slice(1).map(([x, y], i) => {
    const dx = x - pts[i][0];
    const dy = y - pts[i][1];
    const len = Math.hypot(dx, dy);
    return { len, ux: dx / len, uy: dy / len };
  });
  const inner = pts.slice(1, -1).map((_, i) => {
    const a = segs[i];
    const b = segs[i + 1];
    const w = a.len + b.len;
    return [(a.ux * b.len + b.ux * a.len) / w, (a.uy * b.len + b.uy * a.len) / w];
  });
  const last = segs[segs.length - 1];
  const lastInner = inner[inner.length - 1];
  const tangents = [
    [1.5 * segs[0].ux - 0.5 * inner[0][0], 1.5 * segs[0].uy - 0.5 * inner[0][1]],
    ...inner,
    [1.5 * last.ux - 0.5 * lastInner[0], 1.5 * last.uy - 0.5 * lastInner[1]],
  ];
  let path = `M${pts[0][0].toFixed(1)} ${pts[0][1].toFixed(1)}`;
  segs.forEach(({ len }, i) => {
    const [x0, y0] = pts[i];
    const [x1, y1] = pts[i + 1];
    const [t0x, t0y] = tangents[i];
    const [t1x, t1y] = tangents[i + 1];
    const k = len / 3;
    path += `C${(x0 + t0x * k).toFixed(1)} ${(y0 + t0y * k).toFixed(1)} ${(x1 - t1x * k).toFixed(1)} ${(y1 - t1y * k).toFixed(1)} ${x1} ${y1}`;
  });
  return path;
}

function Connectors() {
  return (
    <svg
      viewBox="0 0 1920 915"
      preserveAspectRatio="xMidYMin meet"
      className="pointer-events-none absolute inset-0 z-20 h-full w-full"
      fill="none"
      stroke="#00a9ff"
      strokeWidth="3"
      aria-hidden="true"
    >
      <defs>
        <marker id="head" markerUnits="userSpaceOnUse" markerWidth="16" markerHeight="16" refX="11" refY="7" orient="auto">
          <path d="M0 0l13 7-13 7z" fill="#00a9ff" stroke="none" />
        </marker>
      </defs>
      {LINKS.map((points, i) => (
        <g key={i}>
          <path d={smoothPath(points)} markerEnd="url(#head)" />
          <circle cx={points[0][0]} cy={points[0][1]} r="5.500" />
        </g>
      ))}
    </svg>
  );
}

export default function App() {
  return (
    <main className="relative min-h-screen bg-[#202020] pt-[32px] pr-[79px] pb-[71px] pl-[80px] font-['Inter',sans-serif] [font-feature-settings:'zero','tnum']">
      <div className="grid grid-cols-3 gap-x-[99px] [font-feature-settings:normal]">
        {["Platform-led", "Trusted", "Business to human"].map((title) => (
          <h2 key={title} className="text-center text-[43px] leading-[44px] font-semibold whitespace-nowrap text-white">{title}</h2>
        ))}
      </div>
      <div className="mt-[65px] grid grid-cols-3 gap-x-[99px] gap-y-[79px]">
        <SupportCases />
        <AccessReporting />
        <SpacesOverview />
        <RackView />
        <IpConnect />
        <Marketplace />
      </div>
      <Connectors />
    </main>
  );
}
